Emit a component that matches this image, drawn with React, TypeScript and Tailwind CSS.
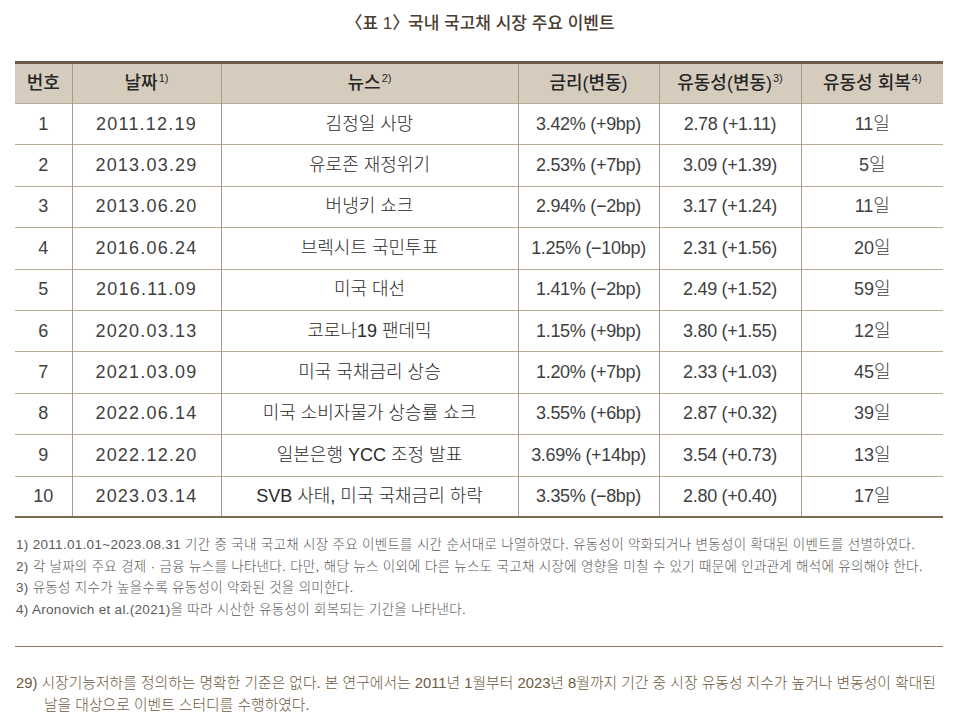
const rows = [
  ['1', '2011.12.19', '김정일 사망', '3.42% (+9bp)', '2.78 (+1.11)', '11일'],
  ['2', '2013.03.29', '유로존 재정위기', '2.53% (+7bp)', '3.09 (+1.39)', '5일'],
  ['3', '2013.06.20', '버냉키 쇼크', '2.94% (−2bp)', '3.17 (+1.24)', '11일'],
  ['4', '2016.06.24', '브렉시트 국민투표', '1.25% (−10bp)', '2.31 (+1.56)', '20일'],
  ['5', '2016.11.09', '미국 대선', '1.41% (−2bp)', '2.49 (+1.52)', '59일'],
  ['6', '2020.03.13', '코로나19 팬데믹', '1.15% (+9bp)', '3.80 (+1.55)', '12일'],
  ['7', '2021.03.09', '미국 국채금리 상승', '1.20% (+7bp)', '2.33 (+1.03)', '45일'],
  ['8', '2022.06.14', '미국 소비자물가 상승률 쇼크', '3.55% (+6bp)', '2.87 (+0.32)', '39일'],
  ['9', '2022.12.20', '일본은행 YCC 조정 발표', '3.69% (+14bp)', '3.54 (+0.73)', '13일'],
  ['10', '2023.03.14', 'SVB 사태, 미국 국채금리 하락', '3.35% (−8bp)', '2.80 (+0.40)', '17일'],
];

const notes = [
  '1) 2011.01.01~2023.08.31 기간 중 국내 국고채 시장 주요 이벤트를 시간 순서대로 나열하였다. 유동성이 악화되거나 변동성이 확대된 이벤트를 선별하였다.',
  '2) 각 날짜의 주요 경제 · 금융 뉴스를 나타낸다. 다만, 해당 뉴스 이외에 다른 뉴스도 국고채 시장에 영향을 미칠 수 있기 때문에 인과관계 해석에 유의해야 한다.',
  '3) 유동성 지수가 높을수록 유동성이 악화된 것을 의미한다.',
  '4) Aronovich et al.(2021)을 따라 시산한 유동성이 회복되는 기간을 나타낸다.',
];

const Sup = ({ n }: { n: string }) => (
  <span className="text-[11px] font-normal ml-[1px] align-[7px] leading-none">{n}</span>
);

export default function App() {
  return (
    <div
      className="w-[967px] h-[718px] bg-white overflow-hidden"
      style={{ fontFamily: '"Liberation Sans", "Noto Sans CJK KR", sans-serif' }}
    >
      <div className="ml-[15px] w-[928px]">
        {/* Title */}
        <h1 className="mt-[12px] h-[24px] leading-[24px] text-center text-[17px] font-medium text-[#4a3e33] pl-[10px]">
          <span className="-ml-[8px]">〈</span>표 1<span className="tracking-[-6px]">〉</span> 국내 국고채 시장 주요 이벤트
        </h1>

        {/* Table */}
        <table className="mt-[25px] w-[928px] table-fixed border-collapse border-t-[3px] border-t-[#6b5a47] border-b-[2px] border-b-[#7a6a55] text-[#3f3f3f]">
          <colgroup>
            <col className="w-[57px]" />
            <col className="w-[149px]" />
            <col className="w-[297px]" />
            <col className="w-[141px]" />
            <col className="w-[142px]" />
            <col className="w-[142px]" />
          </colgroup>
          <thead>
            <tr className="h-[41px] bg-[#d5ccbe] text-[18px] text-[#262626]">
              <th className="font-medium">번호</th>
              <th className="font-medium border-l border-[#a89c86]">날짜<Sup n="1)" /></th>
              <th className="font-medium border-l border-[#a89c86]">뉴스<Sup n="2)" /></th>
              <th className="font-medium border-l border-[#a89c86]">금리(변동)</th>
              <th className="font-medium border-l border-[#a89c86]">유동성(변동)<Sup n="3)" /></th>
              <th className="font-medium border-l border-[#a89c86]">유동성 회복<Sup n="4)" /></th>
            </tr>
          </thead>
          <tbody>
            {rows.map((r) => (
              <tr key={r[0]} className="h-[41.4px] border-t border-[#b8ad98] text-[18px] text-center font-light">
                <td>{r[0]}</td>
                <td className="border-l border-[#a89c86] tracking-[1.2px]">{r[1]}</td>
                <td className="border-l border-[#a89c86] text-[#2b2b2b]">{r[2]}</td>
                <td className="border-l border-[#a89c86] tracking-[-0.3px]">{r[3]}</td>
                <td className="border-l border-[#a89c86] tracking-[-0.3px]">{r[4]}</td>
                <td className="border-l border-[#a89c86]">{r[5]}</td>
              </tr>
            ))}
          </tbody>
        </table>

        {/* Table notes */}
        <div className="mt-[16px] text-[13.5px] leading-[21.5px] text-[#5a5a5a] tracking-[0.3px] font-light">
          {notes.map((n) => (
            <p key={n} className="pl-[1px] whitespace-nowrap">{n}</p>
          ))}
        </div>

        <div className="mt-[26px] h-px bg-[#8a7b68]" />

        {/* Footnote */}
        <p className="mt-[25px] text-[14.8px] leading-[22px] text-[#6d5a3d] pl-[29px] -indent-[28px] font-light break-keep">
          29) 시장기능저하를 정의하는 명확한 기준은 없다. 본 연구에서는 2011년 1월부터 2023년 8월까지 기간 중 시장 유동성 지수가 높거나 변동성이 확대된 날을 대상으로 이벤트 스터디를 수행하였다.
        </p>
      </div>
    </div>
  );
}
